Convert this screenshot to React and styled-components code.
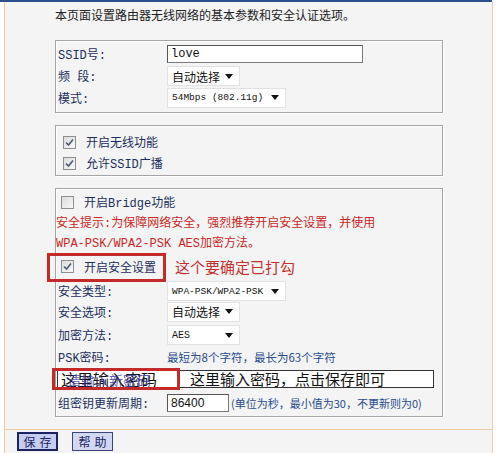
import React from "react";
import styled, { createGlobalStyle } from "styled-components";

const Global = createGlobalStyle`
  html, body { margin: 0; padding: 0; background: #fff; }
  body {
    font-family: "Liberation Mono", "Noto Sans CJK SC", monospace;
    font-size: 12px;
    color: #1c2f5e;
  }
  * { box-sizing: border-box; }
`;

const Page = styled.div`
  width: 500px;
  height: 453px;
  overflow: hidden;
  background: #fff;
  display: flex;
  flex-direction: column;
`;

const TopLine = styled.div`
  width: 492px;
  height: 2px;
  flex: none;
  background: #2c4f8e;
`;

const Frame = styled.div`
  margin-left: 4px;
  width: 489px;
  flex: 1;
  background: #f4f4f4;
  border-left: 1px solid #efc9a4;
  border-right: 1px solid #efc9a4;
  display: flex;
  flex-direction: column;
`;

const Main = styled.div`
  padding: 4px 0 12px 50px;
  display: flex;
  flex-direction: column;
`;

const Intro = styled.div`
  height: 18px;
  line-height: 18px;
  color: #222;
  font-family: "Noto Sans CJK SC", sans-serif;
  margin-bottom: 16px;
`;

const Box = styled.div`
  width: 388px;
  border: 1px solid #a4a4a4;
  box-shadow: inset 1px 1px 0 #fff, 1px 1px 0 #fff;
  padding: ${(p) => p.$pad};
  margin-bottom: ${(p) => p.$mb || 0}px;
  display: flex;
  flex-direction: column;
  gap: ${(p) => p.$gap || 0}px;
`;

const Row = styled.div`
  position: relative;
  height: ${(p) => p.$h}px;
  flex: none;
  display: flex;
  align-items: center;
  padding-left: ${(p) => (p.$indent != null ? p.$indent : 2)}px;
  white-space: nowrap;
`;

const Label = styled.span`
  width: 109px;
  flex: none;
`;

const TextInput = styled.div`
  width: ${(p) => p.$w}px;
  height: 18px;
  background: #fff;
  border: 1px solid #7a7a7a;
  border-top-color: #555;
  border-left-color: #555;
  display: flex;
  align-items: center;
  padding-left: ${(p) => p.$pl || 3}px;
  color: #111;
  font-family: ${(p) => (p.$sans ? '"Liberation Sans", Arial, sans-serif' : "inherit")};
`;

const Select = styled.div`
  width: ${(p) => p.$w}px;
  height: 20px;
  background: #fff;
  border: 1px solid #e2e2e2;
  display: flex;
  align-items: center;
  justify-content: space-between;
  padding: 0 6px 0 4px;
  color: #111;
  font-size: ${(p) => p.$fs || 12}px;
`;

const Arrow = styled.span`
  width: 0;
  height: 0;
  flex: none;
  border-left: 4px solid transparent;
  border-right: 4px solid transparent;
  border-top: 5px solid #111;
`;

const CjkText = styled.span`
  font-family: "Noto Sans CJK SC", sans-serif;
`;

const CheckBox = styled.span`
  width: 13px;
  height: 13px;
  flex: none;
  border: 1px solid #8e8f8f;
  background: linear-gradient(135deg, #dcdcdc, #f8f8f8);
  display: flex;
  align-items: center;
  justify-content: center;
  margin: 0 10px 0 ${(p) => p.$left || 5}px;
`;

const CheckText = styled.span`
  color: #1c2f5e;
`;

const RedNote = styled.span`
  color: #c8281f;
`;

const BlueNote = styled.span`
  color: #2a4b8d;
  font-family: "Noto Sans CJK SC", sans-serif;
  font-size: ${(p) => p.$fs || 12}px;
  margin-left: ${(p) => p.$ml || 0}px;
`;

const Annot = styled.div`
  position: absolute;
  border: 3px solid #c42a2a;
  left: ${(p) => p.$l}px;
  top: ${(p) => p.$t}px;
  width: ${(p) => p.$w}px;
  height: ${(p) => p.$h}px;
  pointer-events: none;
`;

const AnnotText = styled.span`
  position: absolute;
  left: 119px;
  top: 6px;
  font-family: "Noto Sans CJK SC", sans-serif;
  font-size: 15px;
  line-height: 20px;
  color: #c43030;
`;

const PwdBox = styled.div`
  position: relative;
  margin-left: 1px;
  width: 377px;
  height: 18px;
  background: #fff;
  border: 1px solid #333;
  font-family: "Noto Sans CJK SC", sans-serif;
  font-size: 15px;
  line-height: 16px;
  color: #111;
  padding-left: 132px;
`;

const Ghost = styled.span`
  position: absolute;
  left: ${(p) => p.$l}px;
  top: ${(p) => p.$t}px;
  font-size: ${(p) => p.$fs}px;
  line-height: 16px;
  color: ${(p) => p.$c};
  opacity: ${(p) => p.$o || 1};
`;

const Footer = styled.div`
  border-top: 1px solid #efc9a4;
  padding: 2px 0 0 12px;
  display: flex;
  gap: 14px;
`;

const Button = styled.div`
  width: 41px;
  height: 19px;
  background: ${(p) => (p.$primary ? "#c6cbf0" : "#d2d8f2")};
  border: ${(p) => (p.$primary ? "2px solid #1b245e" : "1px solid #3b4677")};
  display: flex;
  align-items: center;
  justify-content: center;
  font-family: "Noto Sans CJK SC", sans-serif;
  color: #1b245e;
  letter-spacing: 4px;
  padding-left: 4px;
`;

const Check = () => (
  <svg width="9" height="9" viewBox="0 0 9 9">
    <path d="M1 4.5 L3.5 7 L8 1.5" fill="none" stroke="#4a5a72" strokeWidth="1.6" />
  </svg>
);

export default function App() {
  return (
    <>
      <Global />
      <Page>
        <TopLine />
        <Frame>
          <Main>
            <Intro>本页面设置路由器无线网络的基本参数和安全认证选项。</Intro>

            <Box $pad="1px 0 4px 0" $mb={12}>
              <Row $h={23}>
                <Label>SSID号:</Label>
                <TextInput $w={196}>love</TextInput>
              </Row>
              <Row $h={22}>
                <Label>频 段:</Label>
                <Select $w={73}>
                  <CjkText>自动选择</CjkText>
                  <Arrow />
                </Select>
              </Row>
              <Row $h={21}>
                <Label>模式:</Label>
                <Select $w={119} $fs={9.5}>
                  <span>54Mbps (802.11g)</span>
                  <Arrow />
                </Select>
              </Row>
            </Box>

            <Box $pad="6px 0 2px 0" $gap={1} $mb={12}>
              <Row $h={20} $indent={0}>
                <CheckBox $left={7}><Check /></CheckBox>
                <CheckText>开启无线功能</CheckText>
              </Row>
              <Row $h={20} $indent={0}>
                <CheckBox $left={7}><Check /></CheckBox>
                <CheckText>允许SSID广播</CheckText>
              </Row>
            </Box>

            <Box $pad="3px 0 2px 0">
              <Row $h={20} $indent={0}>
                <CheckBox $left={5} />
                <CheckText>开启Bridge功能</CheckText>
              </Row>
              <Row $h={20} $indent={0}>
                <RedNote>安全提示:为保障网络安全，强烈推荐开启安全设置，并使用</RedNote>
              </Row>
              <Row $h={19} $indent={0}>
                <RedNote>WPA-PSK/WPA2-PSK AES加密方法。</RedNote>
              </Row>
              <Row $h={31} $indent={0}>
                <CheckBox $left={5}><Check /></CheckBox>
                <CheckText>开启安全设置</CheckText>
                <Annot $l={-9} $t={2} $w={119} $h={29} />
                <AnnotText>这个要确定已打勾</AnnotText>
              </Row>
              <Row $h={18}>
                <Label>安全类型:</Label>
                <Select $w={119} $fs={9.5}>
                  <span>WPA-PSK/WPA2-PSK</span>
                  <Arrow />
                </Select>
              </Row>
              <Row $h={23}>
                <Label>安全选项:</Label>
                <Select $w={73}>
                  <CjkText>自动选择</CjkText>
                  <Arrow />
                </Select>
              </Row>
              <Row $h={24}>
                <Label>加密方法:</Label>
                <Select $w={73} $fs={10}>
                  <span>AES</span>
                  <Arrow />
                </Select>
              </Row>
              <Row $h={19}>
                <Label>PSK密码:</Label>
                <BlueNote $fs={11.5}>最短为8个字符，最长为63个字符</BlueNote>
              </Row>
              <Row $h={26} $indent={0}>
                <PwdBox>
                  <Ghost $l={3} $t={0} $fs={16} $c="#111">这里输入密码</Ghost>
                  <Ghost $l={9} $t={1} $fs={14} $c="#3a3a9a" $o={0.8}>请输入新密码</Ghost>
                  这里输入密码，点击保存即可
                </PwdBox>
                <Annot $l={-4} $t={2} $w={128} $h={22} />
              </Row>
              <Row $h={22}>
                <Label>组密钥更新周期:</Label>
                <TextInput $w={62} $sans>86400</TextInput>
                <BlueNote $ml={2} $fs={11}>(单位为秒，最小值为30，不更新则为0)</BlueNote>
              </Row>
            </Box>
          </Main>
          <Footer>
            <Button $primary>保存</Button>
            <Button>帮助</Button>
          </Footer>
        </Frame>
      </Page>
    </>
  );
}
